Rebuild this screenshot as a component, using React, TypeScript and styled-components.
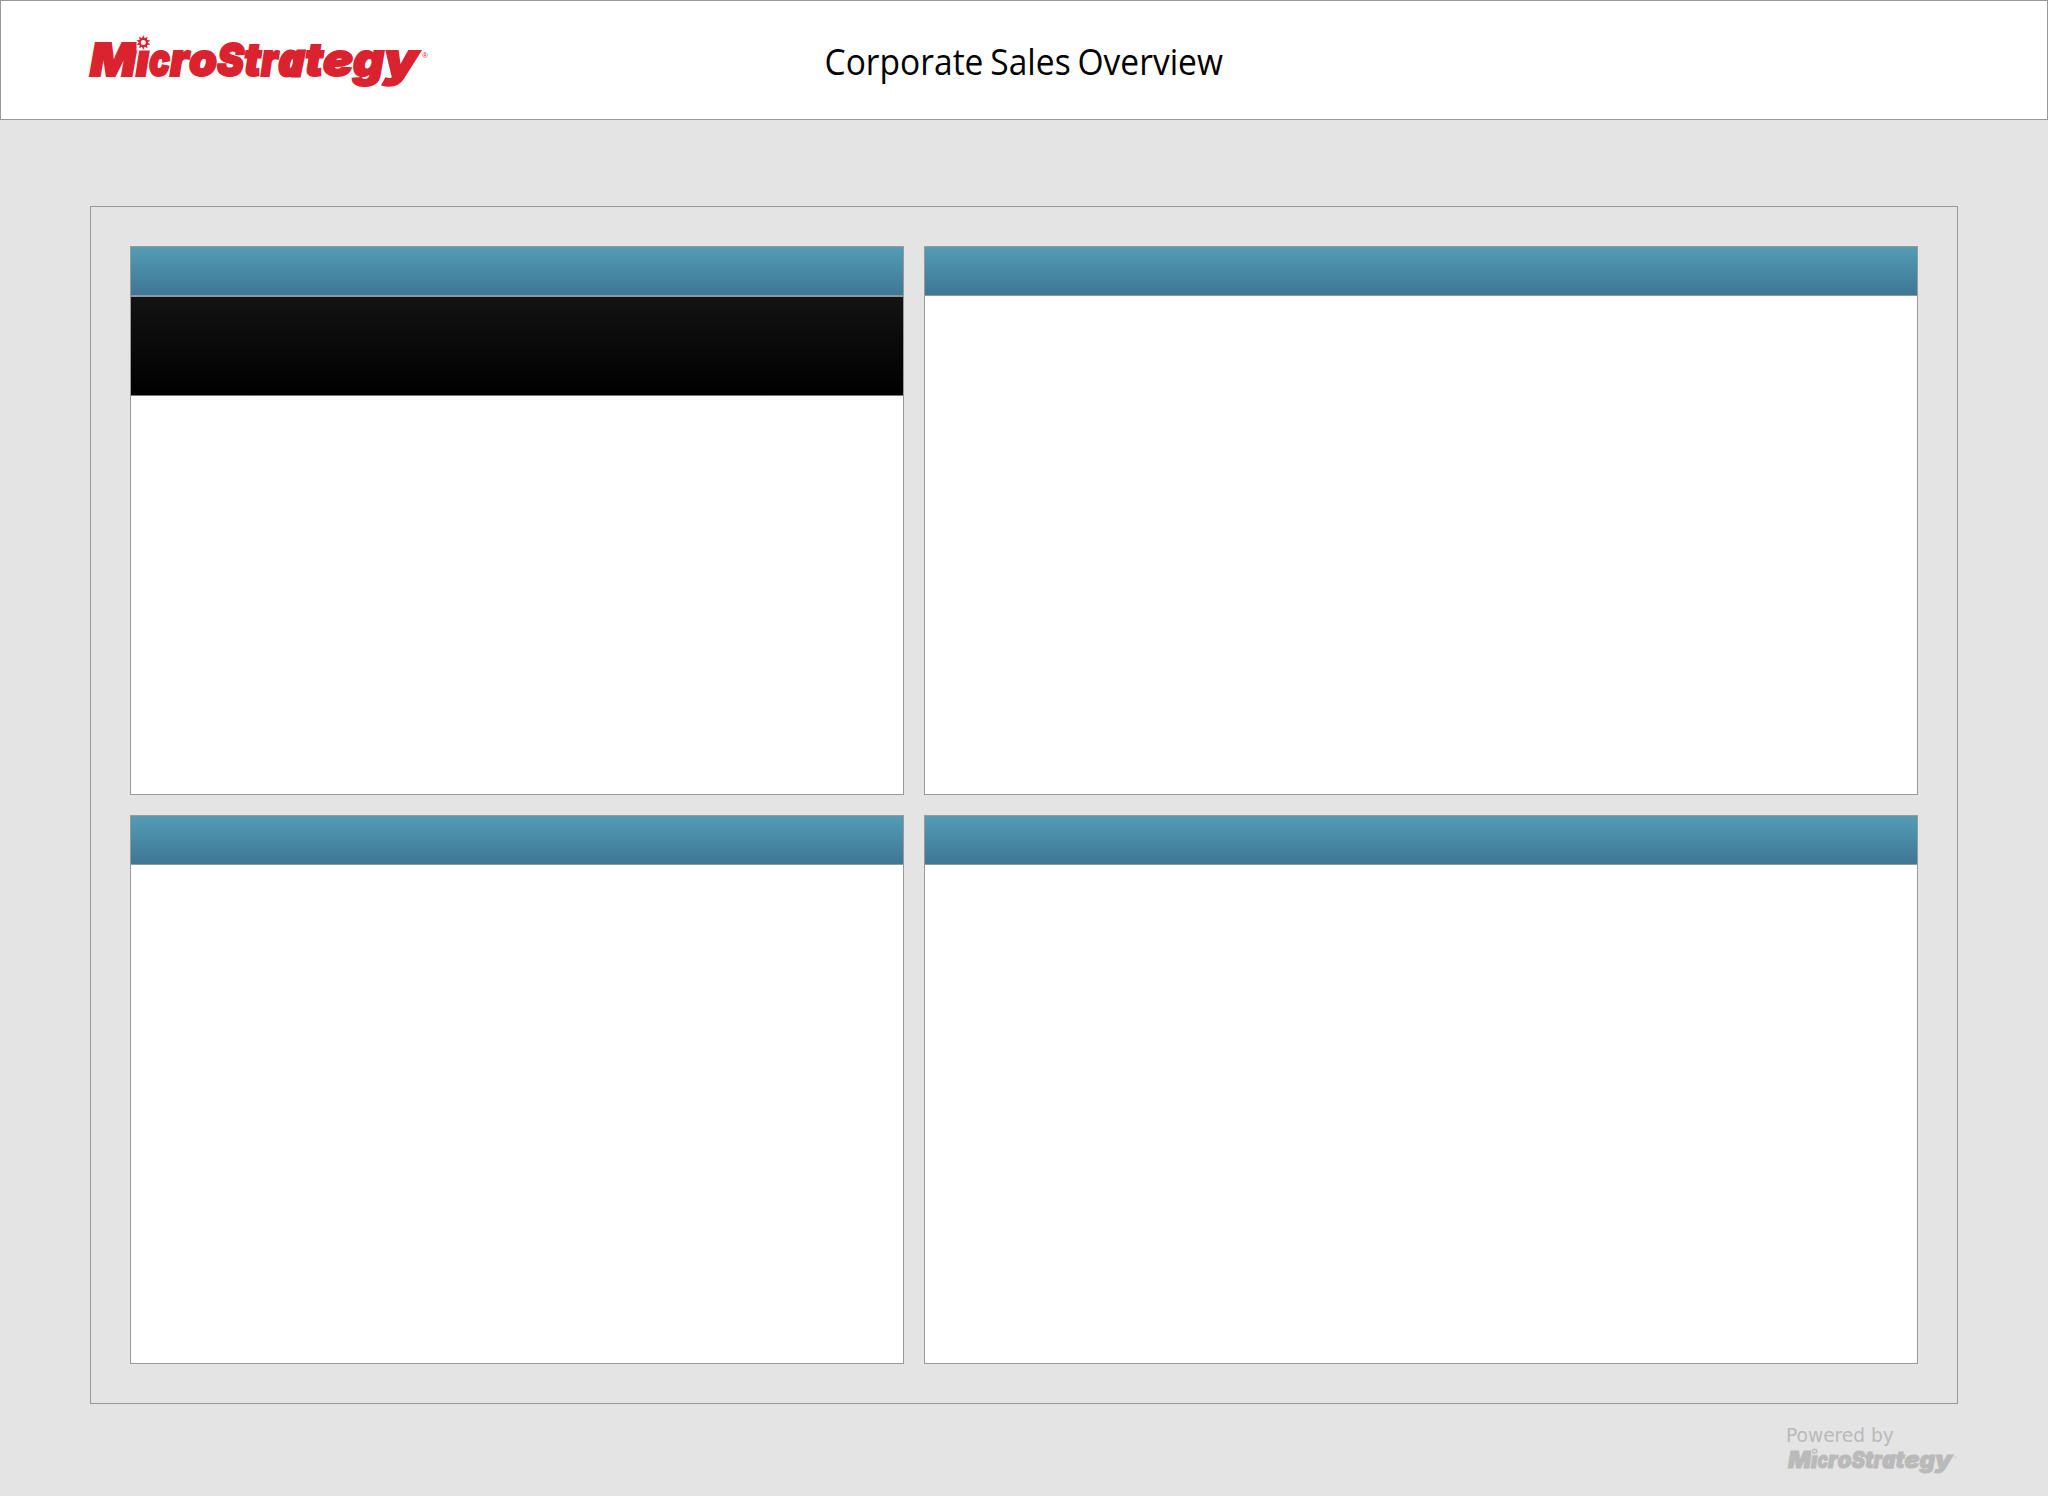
import React from 'react';
import styled, { createGlobalStyle } from 'styled-components';

const GlobalStyle = createGlobalStyle`
  *, *::before, *::after { box-sizing: border-box; }
  body { margin: 0; background: #e4e4e4; }
`;

const Page = styled.div`
  display: flex;
  flex-direction: column;
  width: 2048px;
  height: 1496px;
  overflow: hidden;
  background: #e4e4e4;
`;

const Header = styled.header`
  display: grid;
  grid-template-columns: 1fr auto 1fr;
  align-items: center;
  height: 120px;
  flex: none;
  padding: 0 89px 0 83px;
  border: 1px solid #999;
  background: #fff;
`;

const Title = styled.h1`
  margin: 0 0 0 5px;
  font: 400 36px/50px 'Open Sans', 'Noto Sans', sans-serif;
  color: #000;
  white-space: nowrap;
  width: 400px;
  display: flex;
  justify-content: center;
`;

const TitleText = styled.span`
  transform: scaleX(0.932);
  word-spacing: -2px;
  padding-top: 3px;
`;

const Frame = styled.main`
  display: grid;
  grid-template-columns: 774px 994px;
  grid-template-rows: 549px 549px;
  gap: 20px;
  width: 1868px;
  height: 1198px;
  flex: none;
  margin: 86px 0 0 90px;
  padding: 39px;
  border: 1px solid #999;
`;

const Panel = styled.section`
  display: flex;
  flex-direction: column;
  border: 1px solid #999;
  background: #fff;
`;

const PanelBar = styled.div`
  height: 49px;
  border-bottom: 1px solid #8f999c;
  background: linear-gradient(#529db4, #3f7696);
`;

const SummaryBand = styled.div`
  height: 100px;
  border-top: 1px solid #8f999c;
  border-bottom: 1px solid #777;
  background: linear-gradient(#131313, #000);
`;

const Footer = styled.footer`
  display: flex;
  flex-direction: column;
  align-items: flex-start;
  align-self: flex-end;
  width: 263px;
  padding-top: 22px;
`;

const PoweredBy = styled.span`
  padding-left: 1px;
  font: 400 18.6px/19px 'DejaVu Sans', sans-serif;
  color: #bababa;
`;

const LogoSvg = styled.svg<{ $width: number }>`
  display: block;
  overflow: visible;
  width: ${(p) => p.$width}px;
  height: ${(p) => (p.$width * 60) / 350}px;
`;

const Wordmark = styled.text`
  font: italic 900 46px Inter, 'Open Sans', sans-serif;
`;

const HumanistLetter = styled.tspan`
  font: italic 800 44px 'Open Sans', 'Noto Sans', sans-serif;
  stroke-width: 3px;
`;

const Registered = styled.text`
  font: 400 8px 'Liberation Sans', sans-serif;
`;

/* letter, left edge and advance inside the 350 x 60 logo box */
const letters: [string, number, number][] = [
  ['M', 6, 46],
  ['i', 52, 13],
  ['c', 65, 21],
  ['r', 86, 19],
  ['o', 105, 28],
  ['S', 133, 27],
  ['t', 160, 17],
  ['r', 177, 17],
  ['a', 194, 27],
  ['t', 221, 18],
  ['e', 239, 30],
  ['g', 269, 31],
  ['y', 300, 34],
];

const burst = Array.from({ length: 20 }, (_, i) => {
  const r = i % 2 ? 4.4 : 7.2;
  const a = (i * Math.PI) / 10 - Math.PI / 2;
  return `${(59.3 + r * Math.cos(a)).toFixed(2)},${(12.5 + r * Math.sin(a)).toFixed(2)}`;
}).join(' ');

function Logo({ width, color, ground }: { width: number; color: string; ground: string }) {
  return (
    <LogoSvg $width={width} viewBox="0 0 350 60" role="img" aria-label="MicroStrategy">
      <Wordmark y={46.4} fill={color} stroke={color} strokeWidth={2}>
        {letters.map(([ch, x, w], i) => {
          const Letter = ch === 'a' ? HumanistLetter : 'tspan';
          return (
            <Letter key={i} x={x} textLength={w} lengthAdjust="spacingAndGlyphs">
              {ch}
            </Letter>
          );
        })}
      </Wordmark>
      <path d="M52.5 3H72V20.5H52.5Z" fill={ground} />
      <polygon points={burst} fill={color} />
      <circle cx={59.3} cy={12.5} r={2.5} fill={ground} />
      <Registered x={338} y={28} fill={color} textLength={6} lengthAdjust="spacingAndGlyphs">
        ®
      </Registered>
    </LogoSvg>
  );
}

export default function App() {
  return (
    <Page>
      <GlobalStyle />
      <Header>
        <Logo width={350} color="#da232e" ground="#fff" />
        <Title>
          <TitleText>Corporate Sales Overview</TitleText>
        </Title>
      </Header>
      <Frame>
        <Panel>
          <PanelBar />
          <SummaryBand />
        </Panel>
        <Panel>
          <PanelBar />
        </Panel>
        <Panel>
          <PanelBar />
        </Panel>
        <Panel>
          <PanelBar />
        </Panel>
      </Frame>
      <Footer>
        <PoweredBy>Powered by</PoweredBy>
        <Logo width={175} color="#bababa" ground="#e4e4e4" />
      </Footer>
    </Page>
  );
}
